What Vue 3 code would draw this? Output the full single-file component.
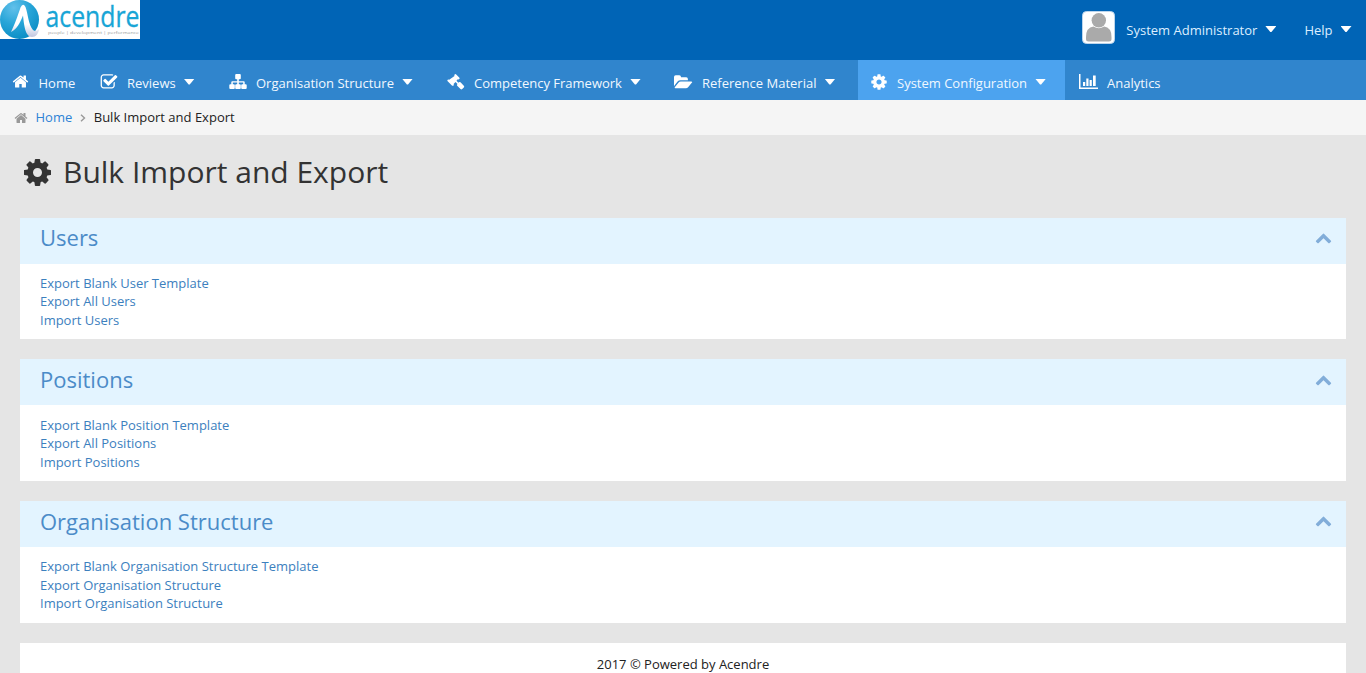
<script setup>
import { ref } from 'vue'

const icons = {
  home: 'M1472 992v480q0 26-19 45t-45 19h-384v-384h-256v384h-384q-26 0-45-19t-19-45v-480q0-1 .5-3t.5-3l575-474 575 474q1 2 1 6zm223-69l-62 74q-8 9-21 11h-3q-13 0-21-7l-692-577-692 577q-12 8-24 7-13-2-21-11l-62-74q-8-10-7-23.5t11-21.5l719-599q32-26 76-26t76 26l244 204v-195q0-14 9-23t23-9h192q14 0 23 9t9 23v408l219 182q10 8 11 21.5t-7 23.5z',
  check: 'M1472 930v318q0 119-84.500 203.500t-203.500 84.500h-832q-119 0-203.500-84.500t-84.500-203.500v-832q0-119 84.500-203.500t203.500-84.500h832q63 0 117 25 15 7 18 23 3 17-9 29l-49 49q-10 10-23 10-3 0-9-2-23-6-45-6h-832q-66 0-113 47t-47 113v832q0 66 47 113t113 47h832q66 0 113-47t47-113v-254q0-13 9-22l64-64q10-10 23-10 6 0 12 3 20 8 20 29zm231-489l-814 814q-24 24-57 24t-57-24l-430-430q-24-24-24-57t24-57l110-110q24-24 57-24t57 24l263 263 647-647q24-24 57-24t57 24l110 110q24 24 24 57t-24 57z',
  cog: 'M1152 896q0-106-75-181t-181-75-181 75-75 181 75 181 181 75 181-75 75-181zm512-109v222q0 12-8 23t-20 13l-185 28q-19 54-39 91 35 50 107 138 10 12 10 25t-9 23q-27 37-99 108t-94 71q-12 0-26-9l-138-108q-44 23-91 38-16 136-29 186-7 28-36 28h-222q-14 0-24.500-8.500t-11.500-21.500l-28-184q-49-16-90-37l-141 107q-10 9-25 9-14 0-25-11-126-114-165-168-7-10-7-23 0-12 8-23 15-21 51-66.500t54-70.500q-27-50-41-99l-183-27q-13-2-21-12.500t-8-23.500v-222q0-12 8-23t19-13l186-28q14-46 39-92-40-57-107-138-10-12-10-24 0-10 9-23 26-36 98.500-107.500t94.500-71.500q13 0 26 10l138 107q44-23 91-38 16-136 29-186 7-28 36-28h222q14 0 24.500 8.500t11.500 21.500l28 184q49 16 90 37l142-107q9-9 24-9 13 0 25 10 129 119 165 170 7 8 7 22 0 12-8 23-15 21-51 66.500t-54 70.500q26 50 41 98l183 28q13 2 21 12.500t8 23.500z',
  chevron: 'M1683 1331l-166 165q-19 19-45 19t-45-19l-531-531-531 531q-19 19-45 19t-45-19l-166-165q-19-19-19-45.500t19-45.500l742-741q19-19 45-19t45 19l742 741q19 19 19 45.500t-19 45.500z',
  sitemap: 'M7.200 1h3.600q1 0 1 1v3.200q0 1-1 1h-1v2h4.900q1 0 1 1v2h1q1 0 1 1V15q0 1-1 1h-3.500q-1 0-1-1v-2.800q0-1 1-1h1V9.500H9.800v1.700h1q1 0 1 1V15q0 1-1 1H7.200q-1 0-1-1v-2.800q0-1 1-1h1V9.500H3.800v1.700h1q1 0 1 1V15q0 1-1 1H1.300q-1 0-1-1v-2.800q0-1 1-1h1v-2q0-1 1-1h4.900v-2h-1q-1 0-1-1V2q0-1 1-1z',
  gavel: 'M7.600 .5q.8-.8 1.600 0l3 3q.8.900.100 1.600-.8.600-1.600.1L9.500 6.800l1.900 1.900.5-.5q.8-.6 1.600.1l3.300 3.400q.8.900 0 1.700l-1.600 1.700q-.9.800-1.700 0l-3.300-3.400q-.7-.7.100-1.500l.2-.2-2-2-1.900 1.900q.5.900 0 1.500-.9.700-1.700 0L.7 7.300q-.7-.8 0-1.600.7-.5 1.500 0l5.300-3.600q-.5-.8.100-1.600z',
  folder: 'M0 12.500V2.900Q0 1.200 1.700 1.200h3.600Q7 1.200 7 2.900v.4h5.200q1.700 0 1.700 1.700v1.300H6.500q-1.800 0-2.900 1.300L.1 12.100zM18.200 7.900q0 .4-.4.900l-3.500 4.200q-1 1.200-2.500 1.200H1.400q-1.200 0-.6-1l3.600-4.400q.9-1.200 2.500-1.200h10.500q.8 0 .8.300z',
  chart: 'M0 0h1.500v13.500H19V15H0zM4 8h2.200v4H4zM7.300 4.500h2.200V12H7.300zM10.600 6h2.200v6h-2.200zM14 1.500h2.700V12H14z'
}

const nav = [
  { id: 'home', label: 'Home', icon: 'home', box: '0 0 1792 1792' },
  { id: 'reviews', label: 'Reviews', icon: 'check', box: '0 0 1792 1792', menu: true },
  { id: 'structure', label: 'Organisation Structure', icon: 'sitemap', box: '0 0 18 17', menu: true },
  { id: 'competency', label: 'Competency Framework', icon: 'gavel', box: '0 0 18 16', menu: true },
  { id: 'reference', label: 'Reference Material', icon: 'folder', box: '0 0 19 16', menu: true },
  { id: 'config', label: 'System Configuration', icon: 'cog', box: '0 0 1792 1792', menu: true },
  { id: 'analytics', label: 'Analytics', icon: 'chart', box: '0 0 19 15' }
]

const panels = ref([
  { title: 'Users', open: true, links: ['Export Blank User Template', 'Export All Users', 'Import Users'] },
  { title: 'Positions', open: true, links: ['Export Blank Position Template', 'Export All Positions', 'Import Positions'] },
  { title: 'Organisation Structure', open: true, links: ['Export Blank Organisation Structure Template', 'Export Organisation Structure', 'Import Organisation Structure'] }
])
</script>

<template>
  <div class="page">
    <header class="top">
      <svg class="logo" width="140" height="39" viewBox="0 0 140 39">
        <defs>
          <radialGradient id="orb" cx="35%" cy="20%" r="85%">
            <stop offset="0" stop-color="#62c0ea" />
            <stop offset=".5" stop-color="#27a5d8" />
            <stop offset="1" stop-color="#0a8cc4" />
          </radialGradient>
          <linearGradient id="swoosh" x1="0" y1="0" x2="0" y2="1">
            <stop offset=".6" stop-color="#fff" />
            <stop offset="1" stop-color="#c0c5e0" />
          </linearGradient>
        </defs>
        <rect width="140" height="39" fill="#fff" />
        <circle cx="19.500" cy="19.500" r="19.500" fill="url(#orb)" />
        <path d="M11 32C14.500 25 18 15 20.500 7.500q2.500-5 5-.5C28 14 28.500 25 33 30q3 2.500 6-1c-.5 4.500-3 8-7 8-7 0-8-13-9-21.500C20 23 17 29 11 32z" fill="url(#swoosh)" />
        <text class="brand" x="45.500" y="26.800" textLength="94" lengthAdjust="spacingAndGlyphs">acendre</text>
        <text class="tagline" x="48" y="34.200" textLength="91" lengthAdjust="spacingAndGlyphs">people | development | performance</text>
      </svg>
      <div class="account">
        <svg class="avatar" width="33" height="33" viewBox="0 0 33 33">
          <rect x=".5" y=".5" width="32" height="32" rx="4" fill="#fff" stroke="#bcd5ec" />
          <circle cx="16.800" cy="9.300" r="7.200" fill="#aaa" />
          <path d="M4 26q0-9.500 7.500-10.500 5.300 3.400 10.600 0Q29.500 16.500 29.500 26v2q0 2.500-2.500 2.500H6.500Q4 30.500 4 28z" fill="#aaa" />
        </svg>
        <span class="user">System Administrator</span><i class="caret"></i>
        <span class="help">Help</span><i class="caret"></i>
      </div>
    </header>

    <nav class="nav">
      <a v-for="item in nav" :key="item.id" class="item" :class="[item.id, { active: item.id === 'config' }]">
        <svg class="icon" :class="item.icon" :viewBox="item.box"><path :d="icons[item.icon]" /></svg>
        <span>{{ item.label }}</span>
        <i v-if="item.menu" class="caret"></i>
      </a>
    </nav>

    <div class="crumbs">
      <svg class="crumb-home" viewBox="0 0 1792 1792"><path :d="icons.home" /></svg>
      <a>Home</a>
      <svg class="sep" width="6" height="8" viewBox="0 0 6 8"><path d="M1 .7L4.500 4 1 7.300" /></svg>
      <span>Bulk Import and Export</span>
    </div>

    <main class="content">
      <h1><svg viewBox="128 128 1536 1536"><path :d="icons.cog" /></svg>Bulk Import and Export</h1>
      <section v-for="panel in panels" :key="panel.title" class="panel">
        <div class="head" @click="panel.open = !panel.open">
          <h2>{{ panel.title }}</h2>
          <svg viewBox="0 0 1792 1792"><path :d="icons.chevron" /></svg>
        </div>
        <div v-if="panel.open" class="body">
          <a v-for="link in panel.links" :key="link">{{ link }}</a>
        </div>
      </section>
      <footer>2017 © Powered by Acendre</footer>
    </main>
  </div>
</template>

<style>
body { background: #e5e5e5; overflow: hidden; }
</style>

<style scoped>
.page { height: 673px; overflow: hidden; background: #e5e5e5; color: #222; font: 13px/18.57px "Open Sans", sans-serif; }
svg { display: block; flex: none; fill: currentColor; }
.top { display: flex; justify-content: space-between; height: 60px; background: #0064b6; color: #dceeff; }
.brand { font: 28.5px "Open Sans", sans-serif; fill: #18a5d6; stroke: #18a5d6; stroke-width: .3px; }
.tagline { font: 4px "Open Sans", sans-serif; fill: #999; }
.account { display: flex; align-items: center; height: 60px; padding-right: 14.500px; }
.avatar { margin: -5px 11.500px 0 0; }
.help { margin-left: 28px; }
.caret { flex: none; width: 11px; height: 6px; margin-left: 8px; background: #fff; clip-path: polygon(0 0, 100% 0, 55% 100%, 45% 100%); }
.account .caret { margin-top: -2px; }
.nav { display: grid; grid-template-columns: 88px 129px 218px 227px 196px 207px 1fr; height: 40px; background: #3085cd; color: #fff; }
.item { display: flex; align-items: center; padding: 6px 0 0 12px; white-space: nowrap; color: #f0f8ff; }
.item .caret { margin-top: -3px; }
.active { background: #4ca3ef; }
.icon { color: #fff; margin-top: -3px; }
.icon.home { width: 17px; height: 17px; margin-right: 9.500px; }
.icon.check { width: 18px; height: 18px; margin-right: 9px; }
.icon.sitemap { width: 18px; height: 17px; margin-right: 9px; }
.icon.gavel { width: 18px; height: 16px; margin-right: 9px; }
.icon.folder { width: 19px; height: 16px; margin-right: 9px; }
.icon.cog { width: 18px; height: 18px; margin-right: 9px; }
.icon.chart { width: 19px; height: 15px; margin-left: 2px; margin-right: 9px; }
.crumbs { display: flex; align-items: center; height: 35px; padding-left: 14px; background: #f5f5f5; }
.crumb-home { width: 14px; height: 14px; margin-right: 7.500px; color: #999; }
.crumbs a { color: #2d83d5; }
.sep { margin: 1px 7.500px 0 8px; fill: none; stroke: #999; stroke-width: 1.4; }
.content { padding: 0 20px; }
h1 { display: flex; align-items: flex-start; height: 82.500px; margin: 0; padding-left: 4px; box-sizing: border-box; font-size: 30px; font-weight: 400; line-height: 73px; color: #333; }
h1 svg { width: 27px; height: 27px; margin: 24px 12px 0 0; }
.panel { margin-bottom: 20px; background: #fff; }
.head { display: flex; justify-content: space-between; height: 46px; padding: 0 14px 0 20px; background: #e3f4ff; color: #4b8bc8; }
.head h2 { margin: -.2px 0 0; font-size: 22px; line-height: 41px; font-weight: 400; }
.head svg { width: 17px; height: 17px; margin-top: 11.500px; color: #82add9; }
.body { display: flex; flex-direction: column; padding: 10.360px 20px 9.640px; color: #3c80be; }
footer { height: 43px; background: #fff; text-align: center; line-height: 43px; }
</style>
